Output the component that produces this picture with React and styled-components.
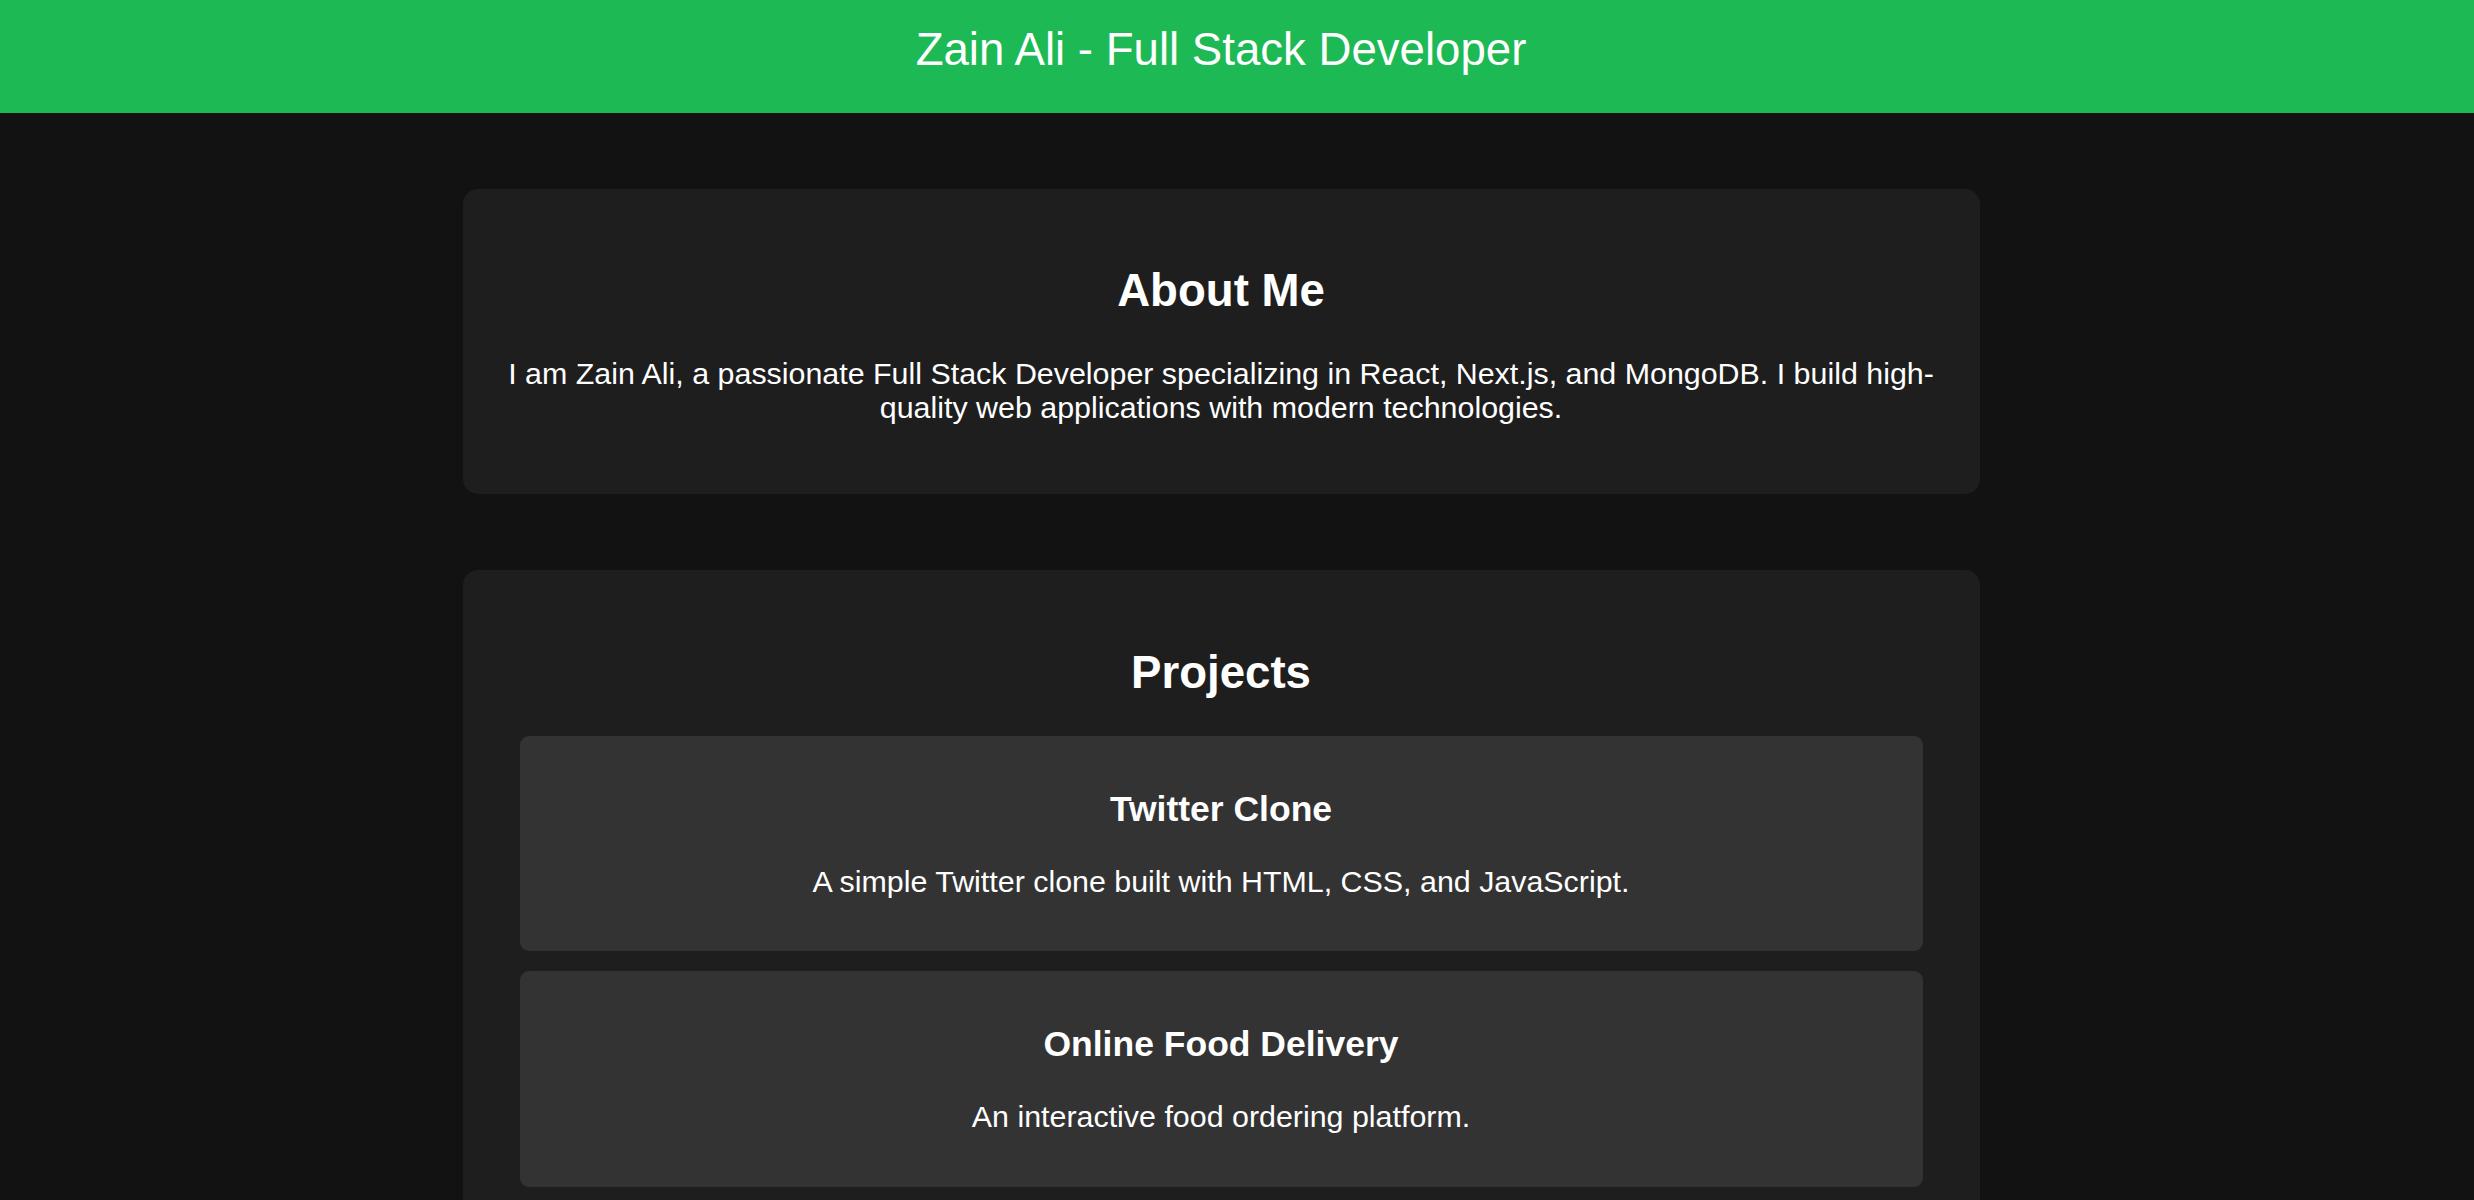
import React from "react";
import styled, { createGlobalStyle } from "styled-components";

const GlobalStyle = createGlobalStyle`
  html, body {
    margin: 0;
    padding: 0;
    background: #121212;
    color: #ffffff;
    font-family: "Liberation Sans", Arial, Helvetica, sans-serif;
  }
  * { box-sizing: border-box; }
`;

const Header = styled.header`
  background: #1db954;
  padding: 24px 32px 37px 0;
  text-align: center;
`;

const Title = styled.h1`
  margin: 0;
  font-size: 45.6px;
  font-weight: 400;
  line-height: 52px;
  color: #ffffff;
`;

const Main = styled.main`
  display: flex;
  flex-direction: column;
  align-items: center;
  gap: 76px;
  padding: 76px 32px 76px 0;
`;

const Section = styled.section`
  width: 1517px;
  background: #1e1e1e;
  border-radius: 15px;
  padding: 37.5px;
  text-align: center;
`;

const SectionTitle = styled.h2`
  margin: ${(p) => p.$before}px 0 ${(p) => p.$after}px;
  font-size: 45.6px;
  font-weight: 700;
  line-height: 52px;
`;

const AboutText = styled.p`
  margin: 0 0 32px;
  font-size: 30.4px;
  line-height: 34.5px;
`;

const ProjectList = styled.div`
  display: flex;
  flex-direction: column;
  gap: 20px;
  margin: 0 19.5px;
`;

const ProjectCard = styled.article`
  background: #333333;
  border-radius: 9px;
  padding: 19px 30px;
`;

const ProjectName = styled.h3`
  margin: 34px 0 0;
  font-size: 35.5px;
  font-weight: 700;
  line-height: 40px;
`;

const ProjectDesc = styled.p`
  margin: 35px 0 34px;
  font-size: 30.4px;
  line-height: 34.5px;
`;

const projects = [
  {
    name: "Twitter Clone",
    desc: "A simple Twitter clone built with HTML, CSS, and JavaScript.",
  },
  {
    name: "Online Food Delivery",
    desc: "An interactive food ordering platform.",
  },
];

export default function App() {
  return (
    <>
      <GlobalStyle />
      <Header>
        <Title>Zain Ali - Full Stack Developer</Title>
      </Header>
      <Main>
        <Section>
          <SectionTitle $before={38} $after={39}>
            About Me
          </SectionTitle>
          <AboutText>
            I am Zain Ali, a passionate Full Stack Developer specializing in
            React, Next.js, and MongoDB. I build high-quality web applications
            with modern technologies.
          </AboutText>
        </Section>
        <Section>
          <SectionTitle $before={39} $after={37}>
            Projects
          </SectionTitle>
          <ProjectList>
            {projects.map((p) => (
              <ProjectCard key={p.name}>
                <ProjectName>{p.name}</ProjectName>
                <ProjectDesc>{p.desc}</ProjectDesc>
              </ProjectCard>
            ))}
          </ProjectList>
        </Section>
      </Main>
    </>
  );
}
